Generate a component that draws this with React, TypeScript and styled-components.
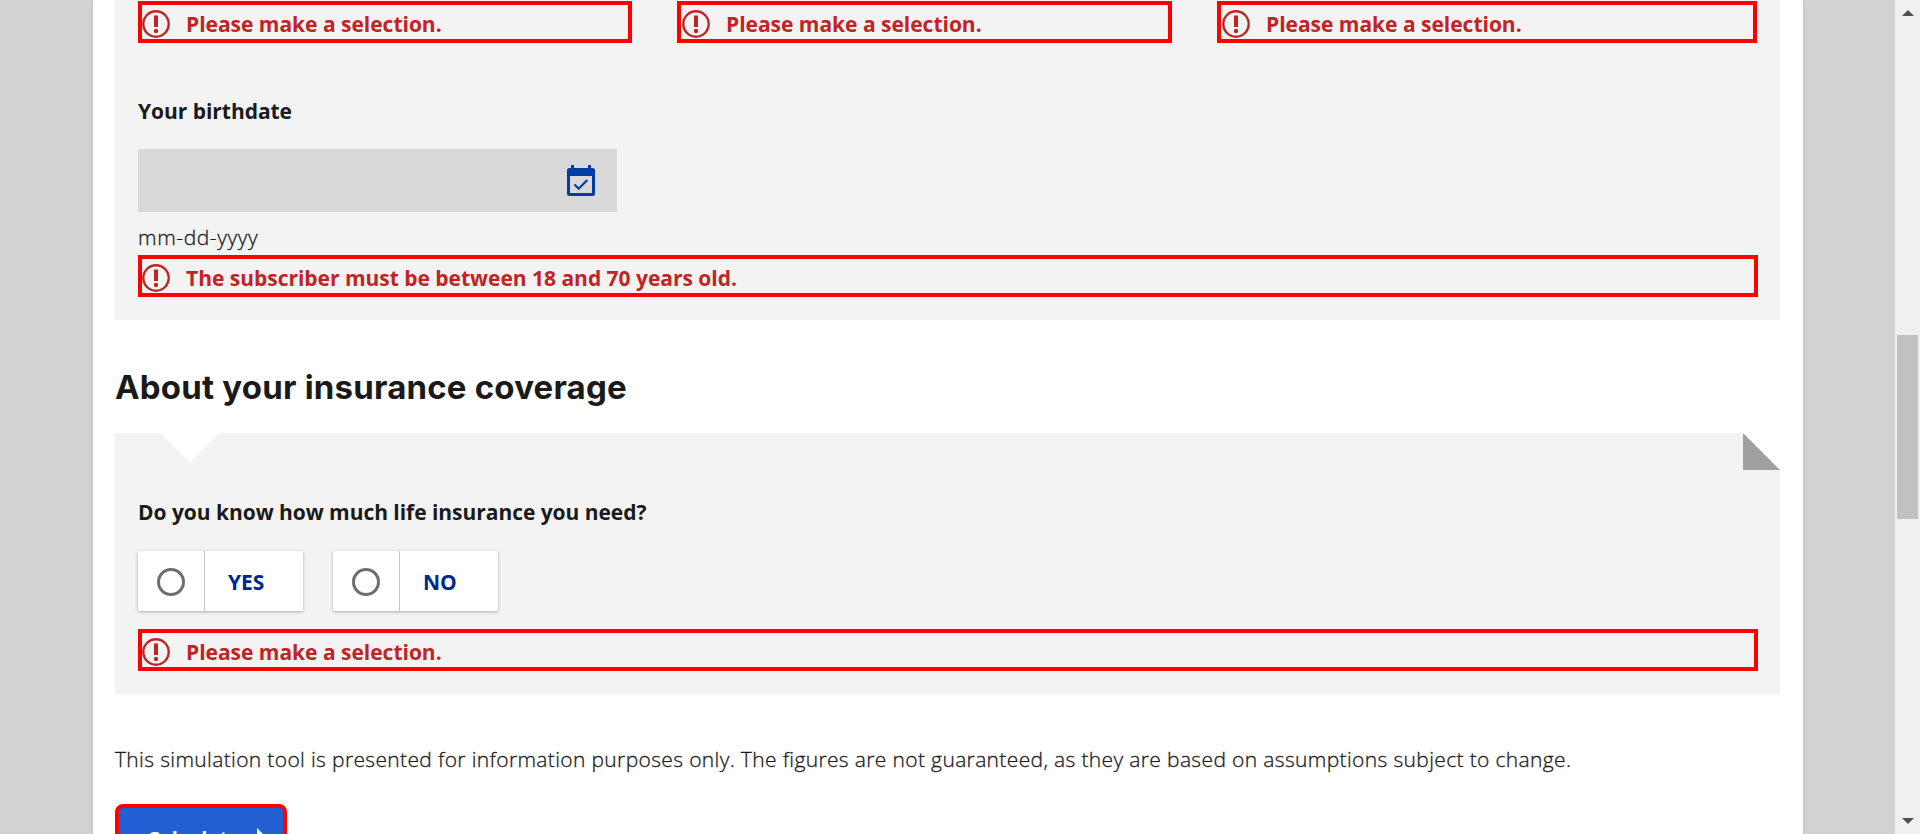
import React from "react";
import styled, { createGlobalStyle } from "styled-components";

const GlobalStyle = createGlobalStyle`
  * { box-sizing: border-box; }
  html, body { margin: 0; padding: 0; overflow: hidden; }
  body {
    font-family: "Open Sans", "Noto Sans", sans-serif;
    font-size: 21px;
    color: #1a1a1a;
    background: #d2d2d2;
  }
`;

const Viewport = styled.div`
  display: flex;
  width: 1920px;
  height: 834px;
  overflow: hidden;
`;

const Backdrop = styled.div`
  flex: 1;
  display: flex;
  justify-content: center;
  padding: 0 92px 0 93px;
  background: #d2d2d2;
`;

const Page = styled.main`
  flex: 1;
  height: 834px;
  overflow: hidden;
  padding: 0 23px 0 22px;
  background: #fff;
  box-shadow: 0 0 4px rgba(0, 0, 0, 0.12);
`;

const Panel = styled.section<{ $height: number; $top: number }>`
  position: relative;
  height: ${(p) => p.$height}px;
  padding: ${(p) => p.$top}px 22px 0 23px;
  background: #f3f3f3;
`;

const ErrorBox = styled.div`
  display: flex;
  align-items: center;
  height: 42px;
  padding-top: 3px;
  border: 4px solid #ff0000;
  color: #c02424;
  font-weight: 700;
  white-space: nowrap;
`;

const ErrorRow = styled.div`
  display: grid;
  grid-template-columns: 494px 495px 540px;
  column-gap: 45px;

  ${ErrorBox} + ${ErrorBox} {
    padding-left: 1px;
  }
`;

const ErrorText = styled.span`
  font-size: 21px;
  line-height: 30px;
  letter-spacing: -0.02px;
  margin: 0 0 0 16px;
`;

const FieldLabel = styled.label<{ $top: number }>`
  display: block;
  margin-top: ${(p) => p.$top}px;
  font-size: 21px;
  font-weight: 700;
  line-height: 30px;
  letter-spacing: -0.04px;
`;

const DateInput = styled.div`
  display: flex;
  align-items: center;
  justify-content: flex-end;
  width: 479px;
  height: 63px;
  margin-top: 23px;
  padding-right: 22px;
  background: #d9d9d9;
`;

const Hint = styled.div`
  margin: 10px 0 3px;
  font-size: 21px;
  font-weight: 300;
  line-height: 30px;
  letter-spacing: 0.6px;
  -webkit-text-stroke: 0.3px currentColor;
`;

const Heading = styled.h2`
  margin: 46px 0 24px;
  height: 43px;
  font-family: Inter, sans-serif;
  font-size: 33px;
  font-weight: 700;
  line-height: 43px;
  letter-spacing: 0.2px;
  white-space: nowrap;
`;

const Notch = styled.div`
  position: absolute;
  top: 0;
  left: 45px;
  border: 30px solid transparent;
  border-top-color: #fff;
  border-bottom: 0;
`;

const Fold = styled.div`
  position: absolute;
  top: 0;
  right: 0;
  border-top: 37px solid #fff;
  border-left: 37px solid #a0a0a0;
`;

const Options = styled.div`
  display: flex;
  gap: 30px;
  margin: 24px 0 18px;
`;

const Option = styled.button`
  display: flex;
  width: 165px;
  height: 60px;
  padding: 0;
  border: 0;
  background: #fff;
  box-shadow: 0 1px 3px rgba(0, 0, 0, 0.3);
  font: 700 21px/60px "Open Sans", sans-serif;
  color: #00288c;
`;

const OptionMark = styled.span`
  display: flex;
  align-items: center;
  justify-content: center;
  width: 67px;
  height: 60px;
  padding: 1px 1px 0 0;
  border-right: 1px solid #c8c8c8;
`;

const Radio = styled.span`
  width: 28px;
  height: 28px;
  border: 3px solid #6e6e6e;
  border-radius: 50%;
`;

const OptionText = styled.span`
  padding: 1px 0 0 23px;
`;

const Disclaimer = styled.p`
  margin: 51px 0 30px;
  font-size: 21px;
  font-weight: 300;
  line-height: 29px;
  letter-spacing: 0.355px;
  -webkit-text-stroke: 0.3px currentColor;
  white-space: nowrap;
`;

const Calculate = styled.button`
  display: flex;
  align-items: flex-start;
  justify-content: space-between;
  width: 172px;
  height: 72px;
  padding: 16px 17px 0 28px;
  border: 4px solid #ff0000;
  border-radius: 8px;
  background: #2160d3;
  color: #fff;
  font: 700 20px/30px "Open Sans", sans-serif;
`;

const ArrowIcon = styled.svg`
  margin-top: 4px;
`;

const Scrollbar = styled.div`
  display: flex;
  flex-direction: column;
  justify-content: space-between;
  align-items: center;
  width: 25px;
  height: 834px;
  padding: 10px 0;
  background: #f0f0f0;
`;

const Thumb = styled.div`
  width: 21px;
  height: 184px;
  margin: 319px 0 auto;
  background: #c1c1c1;
`;

const AlertIcon = () => (
  <svg width="28" height="28" viewBox="0 0 28 28">
    <circle cx="14" cy="14" r="12.7" fill="none" stroke="currentColor" strokeWidth="2.4" />
    <path d="M12 5.5h4v11.500h-4z" fill="currentColor" />
    <circle cx="14" cy="21" r="2.2" fill="currentColor" />
  </svg>
);

const CalendarIcon = () => (
  <svg width="28" height="32" viewBox="0 0 28 32" fill="none">
    <path
      fillRule="evenodd"
      fill="#003da5"
      d="M4 0h3v3h14V0h3v3h1.500a2.500 2.500 0 0 1 2.500 2.500v23a2.500 2.500 0 0 1-2.500 2.500H2.500A2.500 2.500 0 0 1 0 28.500v-23A2.500 2.500 0 0 1 2.500 3H4zM3 11v17h22V11z"
    />
    <path d="M7.500 19.500l4.200 4.200 8.600-8.700" stroke="#003da5" strokeWidth="2.200" />
  </svg>
);

const FormError = ({ children }: { children: React.ReactNode }) => (
  <ErrorBox role="alert">
    <AlertIcon />
    <ErrorText>{children}</ErrorText>
  </ErrorBox>
);

const RadioOption = ({ label }: { label: string }) => (
  <Option type="button">
    <OptionMark>
      <Radio />
    </OptionMark>
    <OptionText>{label}</OptionText>
  </Option>
);

export default function App() {
  return (
    <Viewport>
      <GlobalStyle />
      <Backdrop>
        <Page>
          <Panel $height={320} $top={1}>
            <ErrorRow>
              <FormError>Please make a selection.</FormError>
              <FormError>Please make a selection.</FormError>
              <FormError>Please make a selection.</FormError>
            </ErrorRow>
            <FieldLabel $top={53}>Your birthdate</FieldLabel>
            <DateInput>
              <CalendarIcon />
            </DateInput>
            <Hint>mm-dd-yyyy</Hint>
            <FormError>The subscriber must be between 18 and 70 years old.</FormError>
          </Panel>
          <Heading>About your insurance coverage</Heading>
          <Panel $height={261} $top={64}>
            <Notch />
            <Fold />
            <FieldLabel $top={0}>Do you know how much life insurance you need?</FieldLabel>
            <Options>
              <RadioOption label="YES" />
              <RadioOption label="NO" />
            </Options>
            <FormError>Please make a selection.</FormError>
          </Panel>
          <Disclaimer>
            This simulation tool is presented for information purposes only. The figures are not
            guaranteed, as they are based on assumptions subject to change.
          </Disclaimer>
          <Calculate type="button">
            Calculate
            <ArrowIcon width="9" height="16" viewBox="0 0 9 16">
              <path d="M0 0l8 8-8 8z" fill="#fff" />
            </ArrowIcon>
          </Calculate>
        </Page>
      </Backdrop>
      <Scrollbar>
        <svg width="12" height="6" viewBox="0 0 12 6">
          <path d="M6 0l6 6H0z" fill="#505050" />
        </svg>
        <Thumb />
        <svg width="12" height="6" viewBox="0 0 12 6">
          <path d="M0 0h12L6 6z" fill="#505050" />
        </svg>
      </Scrollbar>
    </Viewport>
  );
}
